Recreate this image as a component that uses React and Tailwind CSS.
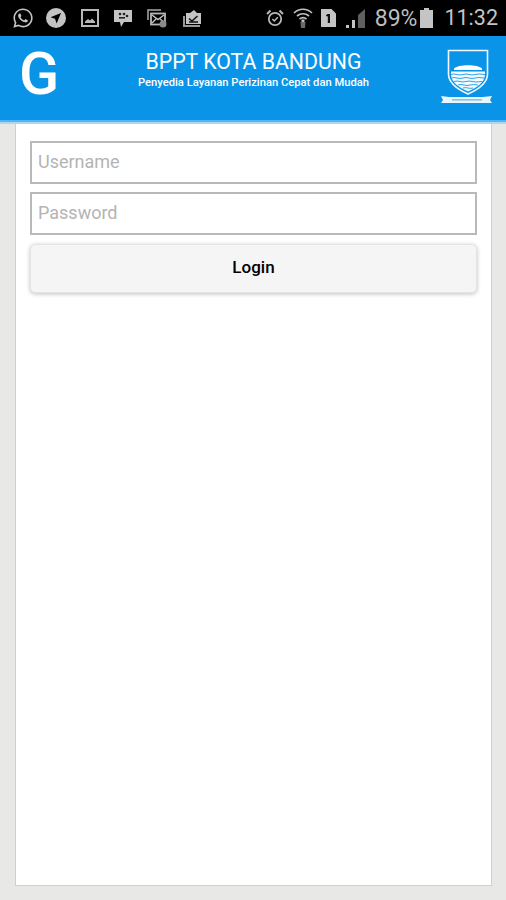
import { FaWhatsapp } from 'react-icons/fa';

const font = { fontFamily: 'Roboto, sans-serif' };

const LocationIcon = () => (
  <svg width="20" height="20" viewBox="0 0 20 20">
    <circle cx="10" cy="10" r="10" fill="#c4c4c4" />
    <path d="M15 5 L4.5 9.2 L9 10.8 L10.6 15.5 Z" fill="#000" />
  </svg>
);

const PictureIcon = () => (
  <svg width="18" height="18" viewBox="0 0 18 18">
    <rect x="1" y="1" width="16" height="16" fill="none" stroke="#b8b8b8" strokeWidth="2" />
    <path d="M4 14 L4 12.5 L7 10 L9 11.5 L11 9.5 L14 12.5 L14 14 Z" fill="#b8b8b8" />
  </svg>
);

const ChatIcon = () => (
  <svg width="18" height="19" viewBox="0 0 18 19">
    <path d="M0 1 H18 V13 H10 L7 18 L6 13 H0 Z" fill="#c4c4c4" />
    <circle cx="6" cy="5" r="1.3" fill="#222" />
    <circle cx="10" cy="5" r="1.3" fill="#222" />
    <circle cx="13" cy="7" r="1.3" fill="#222" />
    <rect x="5" y="8" width="6" height="1.6" fill="#222" />
  </svg>
);

const MailStackIcon = () => (
  <svg width="20" height="19" viewBox="0 0 20 19">
    <path d="M1 11 V1 H14" fill="none" stroke="#aaa" strokeWidth="1.5" />
    <rect x="4" y="4.5" width="14" height="11" fill="none" stroke="#b8b8b8" strokeWidth="1.8" />
    <path d="M5 6 L11 10.5 L17 6 M5 14 L9 10 M17 13 L13 10" fill="none" stroke="#c4c4c4" strokeWidth="1.4" />
    <circle cx="16" cy="15" r="3.5" fill="#8a8a8a" />
  </svg>
);

const BriefcaseIcon = () => (
  <svg width="20" height="19" viewBox="0 0 20 19">
    <path d="M1 7 H3 V16 H18 V18 H1 Z" fill="#9a9a9a" />
    <path d="M4 4 H8 L12 1 L15 4 H19 V15 H4 Z" fill="#c4c4c4" />
    <path d="M7 9.5 L10 12 L15.5 7 M7 13 H16" fill="none" stroke="#111" strokeWidth="1.5" />
  </svg>
);

const AlarmIcon = () => (
  <svg width="18" height="18" viewBox="0 0 18 18">
    <circle cx="9" cy="10" r="6.2" fill="none" stroke="#b8b8b8" strokeWidth="1.8" />
    <path d="M6.3 10 L8.3 12 L11.8 8.2" fill="none" stroke="#b8b8b8" strokeWidth="1.5" />
    <path d="M1 5 L4.5 1.5 M17 5 L13.5 1.5" stroke="#b8b8b8" strokeWidth="2" />
  </svg>
);

const WifiIcon = () => (
  <svg width="20" height="22" viewBox="0 0 20 22">
    <path d="M1 6 C6 1 14 1 19 6 M4 9 C7.5 6 12.5 6 16 9 M6.5 12 C8.5 10.5 11.5 10.5 13.5 12" fill="none" stroke="#c0c0c0" strokeWidth="1.7" />
    <path d="M7.5 15 H12.5 L12 21 H8 Z" fill="#6a6a6a" />
    <rect x="8.5" y="12.5" width="3" height="2.5" fill="#c0c0c0" />
  </svg>
);

const SimIcon = () => (
  <svg width="15" height="18" viewBox="0 0 15 18">
    <path d="M0 0 H10.5 L15 4.5 V18 H0 Z" fill="#c4c4c4" />
    <path d="M6.5 5 H9 V14 H6.8 V7.2 H5 V6.3 Z" fill="#111" />
  </svg>
);

const SignalIcon = () => (
  <svg width="19" height="19" viewBox="0 0 19 19">
    <path d="M19 0 V19 H12 V6 Z" fill="#5f5f5f" />
    <rect x="0" y="16" width="3" height="3" fill="#c4c4c4" />
    <rect x="6" y="11" width="3" height="8" fill="#c4c4c4" />
  </svg>
);

const BatteryIcon = () => (
  <svg width="13" height="20" viewBox="0 0 13 20">
    <path d="M4 0 H9 V2 H13 V20 H0 V2 H4 Z" fill="#c4c4c4" />
  </svg>
);

const CrestIcon = () => (
  <svg width="54" height="56" viewBox="0 0 54 56">
    <path d="M9.5 1.5 H48.5 V25 C48.5 35 38 41 29 45 C20 41 9.5 35 9.5 25 Z" fill="none" stroke="#f2fafe" strokeWidth="1.6" />
    <path d="M15 19.5 C19 15 39 15 43 19.5 V21 H15 Z" fill="#fff" />
    <path d="M12 22.5 H46 V25 C46 34 37 39 29 42.5 C21 39 12 34 12 25 Z" fill="#f4fbff" />
    <path d="M12 25.5 Q15 24.5 18 25.5 T24 25.5 T30 25.5 T36 25.5 T46 25.5 M12.5 29 Q15 28 18 29 T24 29 T30 29 T36 29 T45.5 29 M15 32.5 Q18 31.5 21 32.5 T27 32.5 T33 32.5 T43 32.5 M19 36 Q22 35 25 36 T31 36 T39 36 M24 39 Q26.5 38.2 29 39 T34 39" fill="none" stroke="#2ea3ec" strokeWidth="1" />
    <path d="M2 47 L10 48 H44 L53 47 L51 51 L53 54 H2 L4 51 Z" fill="#e9f6fd" />
    <rect x="13" y="50" width="30" height="1.6" fill="#8cc4e6" />
  </svg>
);

const TextField = ({ placeholder }) => (
  <input
    type="text"
    placeholder={placeholder}
    className="w-full h-[43px] px-[6px] pb-[3px] bg-white border-2 border-[#b9b9b7] text-[18px] text-gray-700 placeholder:text-[#b4b4b4] outline-none"
    style={font}
  />
);

export default function App() {
  return (
    <div className="w-[506px] h-[900px] flex flex-col bg-[#e8e9e7] overflow-hidden" style={font}>
      <div className="h-[36px] shrink-0 bg-black flex items-center pl-[12px] pr-[8px]">
        <div className="flex items-center">
          <FaWhatsapp className="text-[#c4c4c4] text-[22px]" />
          <div className="flex items-center gap-[15px] ml-[12px]">
            <LocationIcon />
            <PictureIcon />
            <ChatIcon />
            <MailStackIcon />
            <BriefcaseIcon />
          </div>
        </div>
        <div className="ml-auto flex items-center">
          <AlarmIcon />
          <div className="ml-[9px]"><WifiIcon /></div>
          <div className="ml-[8px]"><SimIcon /></div>
          <div className="ml-[10px]"><SignalIcon /></div>
          <span className="ml-[10px] text-[23px] text-[#bdbdbd] leading-none">89%</span>
          <div className="ml-[3px]"><BatteryIcon /></div>
          <span className="ml-[11px] text-[21.5px] text-[#c4c4c4] leading-none">11:32</span>
        </div>
      </div>

      <div className="h-[86px] shrink-0 bg-[#0a94e8] border-b-[2px] border-[#55b4f2] flex items-start pl-[19px] pr-[13px]">
        <span className="w-[41px] mt-[8px] text-[59px] leading-[60px] font-medium text-white">G</span>
        <div className="flex-1 flex flex-col items-center pt-[13px] pl-[8px]">
          <span className="text-[21.3px] leading-[26px] text-white">BPPT KOTA BANDUNG</span>
          <span className="text-[11.2px] leading-[14px] mt-[1px] font-medium text-white">Penyedia Layanan Perizinan Cepat dan Mudah</span>
        </div>
        <div className="mt-[13px]"><CrestIcon /></div>
      </div>
      <div className="h-[2px] shrink-0 bg-[#a9d8f7]" />

      <div className="flex-1 ml-[15px] mr-[14px] mb-[14px] bg-white border border-t-0 border-[#bcd4ea] px-[14px] pt-[17px]">
        <div className="flex flex-col gap-[8px]">
          <TextField placeholder="Username" />
          <TextField placeholder="Password" />
        </div>
        <button
          type="button"
          className="w-full h-[49px] mt-[9px] pb-[2px] bg-[#f5f5f5] border border-[#e4e4e4] rounded-[5px] shadow-[0_1px_4px_rgba(0,0,0,0.25)] text-[17px] font-medium text-black"
          style={font}
        >
          Login
        </button>
      </div>
    </div>
  );
}
